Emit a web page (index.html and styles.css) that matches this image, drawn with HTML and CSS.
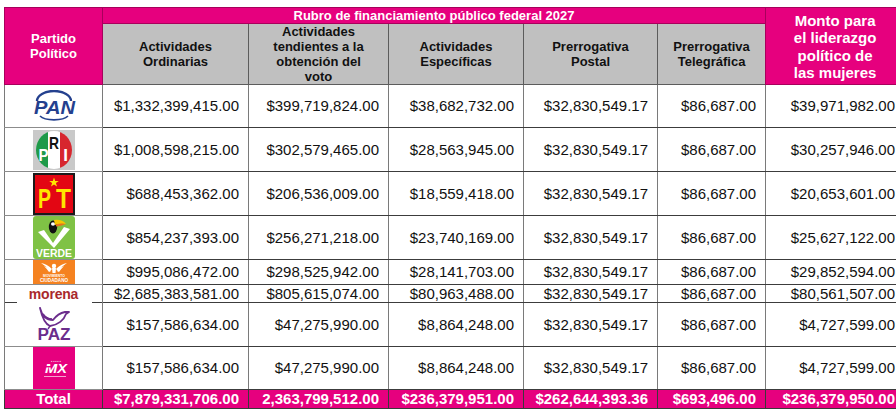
FILE: index.html
```html
<!DOCTYPE html>
<html lang="es">
<head>
<meta charset="utf-8">
<title>Financiamiento público federal 2027</title>
<link rel="stylesheet" href="styles.css">
</head>
<body>
<table class="fin">
  <colgroup>
    <col class="c-party"><col class="c-ord"><col class="c-voto"><col class="c-esp"><col class="c-postal"><col class="c-tel"><col class="c-muj">
  </colgroup>
  <thead>
    <tr class="r-h1">
      <th rowspan="2" class="pink party-h">Partido<br>Político</th>
      <th colspan="5" class="pink rubro">Rubro de financiamiento público federal 2027</th>
      <th rowspan="2" class="pink monto">Monto para<br>el liderazgo<br>político de<br>las mujeres</th>
    </tr>
    <tr class="r-h2">
      <th class="gray">Actividades<br>Ordinarias</th>
      <th class="gray">Actividades<br>tendientes a la<br>obtención del<br>voto</th>
      <th class="gray">Actividades<br>Específicas</th>
      <th class="gray">Prerrogativa<br>Postal</th>
      <th class="gray">Prerrogativa<br>Telegráfica</th>
    </tr>
  </thead>
  <tbody>
    <tr class="r-pan">
      <td class="party">
        <svg class="logo" width="44" height="32" viewBox="0 0 44 32" aria-label="PAN">
          <path d="M5 11 A17 10 0 0 1 39 11" fill="none" stroke="#24408e" stroke-width="2.4"/>
          <text x="2" y="24" class="pan-t" textLength="41" lengthAdjust="spacingAndGlyphs">PAN</text>
          <path d="M8 26 A15 6 0 0 0 36 26" fill="none" stroke="#24408e" stroke-width="1.6"/>
        </svg>
      </td>
      <td>$1,332,399,415.00</td><td>$399,719,824.00</td><td>$38,682,732.00</td><td>$32,830,549.17</td><td>$86,687.00</td><td>$39,971,982.00</td>
    </tr>
    <tr class="r-pri">
      <td class="party">
        <svg class="logo" width="42" height="40" viewBox="0 0 42 40" aria-label="PRI">
          <defs><clipPath id="pri-c"><ellipse cx="21" cy="20" rx="18" ry="19"/></clipPath></defs>
          <rect width="42" height="40" fill="#c9c9c9"/>
          <g clip-path="url(#pri-c)">
            <rect x="0" y="0" width="15" height="40" fill="#1f9a49"/>
            <rect x="15" y="0" width="12" height="40" fill="#ffffff"/>
            <rect x="27" y="0" width="15" height="40" fill="#d7262e"/>
          </g>
          <text x="10.5" y="31" class="pri-t w" textLength="10" lengthAdjust="spacingAndGlyphs">P</text>
          <text x="21" y="19" class="pri-t k" textLength="10" lengthAdjust="spacingAndGlyphs">R</text>
          <text x="32.5" y="31" class="pri-t w">I</text>
        </svg>
      </td>
      <td>$1,008,598,215.00</td><td>$302,579,465.00</td><td>$28,563,945.00</td><td>$32,830,549.17</td><td>$86,687.00</td><td>$30,257,946.00</td>
    </tr>
    <tr class="r-pt">
      <td class="party">
        <svg class="logo" width="42" height="42" viewBox="0 0 42 42" aria-label="PT">
          <rect x="1" y="1" width="40" height="40" fill="#e30613" stroke="#1a1a1a" stroke-width="2"/>
          <polygon points="21,4.5 22.2,8 25.8,8 22.9,10.1 24,13.5 21,11.4 18,13.5 19.1,10.1 16.2,8 19.8,8" fill="#ffe500"/>
          <text x="5" y="35" class="pt-t" textLength="13" lengthAdjust="spacingAndGlyphs">P</text>
          <text x="23" y="35" class="pt-t" textLength="15" lengthAdjust="spacingAndGlyphs">T</text>
        </svg>
      </td>
      <td>$688,453,362.00</td><td>$206,536,009.00</td><td>$18,559,418.00</td><td>$32,830,549.17</td><td>$86,687.00</td><td>$20,653,601.00</td>
    </tr>
    <tr class="r-verde">
      <td class="party">
        <svg class="logo" width="42" height="43" viewBox="0 0 42 43" aria-label="VERDE">
          <rect width="42" height="43" rx="3" fill="#7fc245"/>
          <polygon points="5,16 11,14 20,27 31,11 37,13 21,32" fill="#ffffff"/>
          <ellipse cx="20" cy="11" rx="4.2" ry="6.5" fill="#111111"/>
          <ellipse cx="20" cy="8" rx="2" ry="1.8" fill="#ffffff"/>
          <path d="M21 4 Q29 3 33 8 Q27 7 22 9 Z" fill="#f7c600"/>
          <path d="M23 8.5 Q28 7 33 8 Q28 10 23 10.5 Z" fill="#e8731a"/>
          <text x="3" y="40.5" class="verde-t" textLength="36" lengthAdjust="spacingAndGlyphs">VERDE</text>
        </svg>
      </td>
      <td>$854,237,393.00</td><td>$256,271,218.00</td><td>$23,740,169.00</td><td>$32,830,549.17</td><td>$86,687.00</td><td>$25,627,122.00</td>
    </tr>
    <tr class="r-mc">
      <td class="party">
        <svg class="logo" width="42" height="24" viewBox="0 0 42 24" aria-label="Movimiento Ciudadano">
          <rect width="42" height="24" fill="#f58220"/>
          <path d="M8 3 Q14 4 19 9 L17 11 Q13 6 8 3 Z" fill="#ffffff"/>
          <path d="M34 3 Q28 4 23 9 L25 11 Q29 6 34 3 Z" fill="#ffffff"/>
          <path d="M11 6 Q15 7 18 11 L16 12 Q14 9 11 6 Z" fill="#ffffff"/>
          <path d="M31 6 Q27 7 24 11 L26 12 Q28 9 31 6 Z" fill="#ffffff"/>
          <circle cx="21" cy="6" r="2.2" fill="#ffffff"/>
          <path d="M19 8 L23 8 L22.5 13 L19.5 13 Z" fill="#ffffff"/>
          <text x="21" y="17" class="mc-t s">MOVIMIENTO</text>
          <text x="21" y="22" class="mc-t b">CIUDADANO</text>
        </svg>
      </td>
      <td>$995,086,472.00</td><td>$298,525,942.00</td><td>$28,141,703.00</td><td>$32,830,549.17</td><td>$86,687.00</td><td>$29,852,594.00</td>
    </tr>
    <tr class="r-morena">
      <td class="party morena-cell"><span class="morena">morena</span></td>
      <td>$2,685,383,581.00</td><td>$805,615,074.00</td><td>$80,963,488.00</td><td>$32,830,549.17</td><td>$86,687.00</td><td>$80,561,507.00</td>
    </tr>
    <tr class="r-paz">
      <td class="party paz-cell">
        <svg class="logo" width="36" height="38" viewBox="0 0 36 38" aria-label="PAZ">
          <path d="M4 3 C6 11 11 15 17 15 C20 11 24 8 29 7 L33 7 L30 9 C28 15 22 20 14 21 C9 19 6 12 4 3 Z" fill="none" stroke="#6b2d8c" stroke-width="1.8" stroke-linejoin="round"/>
          <path d="M7 9 C10 13 13 14 16 14" fill="none" stroke="#6b2d8c" stroke-width="1.4"/>
          <path d="M14 21 L12 24" fill="none" stroke="#6b2d8c" stroke-width="1.4"/>
          <text x="18" y="35" class="paz-t" textLength="33" lengthAdjust="spacingAndGlyphs">PAZ</text>
        </svg>
      </td>
      <td>$157,586,634.00</td><td>$47,275,990.00</td><td>$8,864,248.00</td><td>$32,830,549.17</td><td>$86,687.00</td><td>$4,727,599.00</td>
    </tr>
    <tr class="r-mx">
      <td class="party">
        <svg class="logo" width="42" height="42" viewBox="0 0 42 42" aria-label="México">
          <rect width="42" height="42" fill="#e6007e"/>
          <text x="23" y="15" class="mx-s">● ● ● ● ●</text>
          <text x="12" y="26" class="mx-t" textLength="22" lengthAdjust="spacingAndGlyphs">MX</text>
          <rect x="11" y="19" width="8" height="1.4" fill="#e6007e"/>
          <rect x="11" y="29" width="22" height="0.8" fill="#ffffff" opacity="0.8"/>
        </svg>
      </td>
      <td>$157,586,634.00</td><td>$47,275,990.00</td><td>$8,864,248.00</td><td>$32,830,549.17</td><td>$86,687.00</td><td>$4,727,599.00</td>
    </tr>
    <tr class="r-total">
      <td class="total-l">Total</td>
      <td>$7,879,331,706.00</td><td>2,363,799,512.00</td><td>$236,379,951.00</td><td>$262,644,393.36</td><td>$693,496.00</td><td>$236,379,950.00</td>
    </tr>
  </tbody>
</table>
</body>
</html>
```
FILE: styles.css
```css
html, body {
  margin: 0;
  padding: 0;
  background: #ffffff;
  overflow: hidden;
}

body {
  font-family: "Liberation Sans", Arial, sans-serif;
  color: #111111;
}

.fin {
  margin: 7px 0 0 4px;
  border-collapse: collapse;
  table-layout: fixed;
  width: 900px;
}

.c-party { width: 98px; }
.c-ord { width: 146px; }
.c-voto { width: 140px; }
.c-esp { width: 135px; }
.c-postal { width: 134px; }
.c-tel { width: 108px; }
.c-muj { width: 139px; }

.fin th,
.fin td {
  padding: 0;
  border: 1px solid #7a7a7a;
}

.fin th {
  font-weight: bold;
  font-size: 13px;
  line-height: 15px;
  text-align: center;
  vertical-align: middle;
}

.fin th.pink {
  background: #e6007e;
  color: #ffffff;
  border-color: #a8005c;
}

.fin th.gray {
  background: #c0c0c0;
  color: #111111;
  border-color: #5c5c5c;
}

.fin th.rubro {
  font-size: 13px;
  line-height: 14px;
}

.fin th.monto {
  font-size: 15px;
  line-height: 17.3px;
  padding-top: 1px;
}

.r-h1 { height: 16px; }
.r-h2 { height: 61px; }
.r-pan { height: 43px; }
.r-pri { height: 44px; }
.r-pt { height: 44px; }
.r-verde { height: 44px; }
.r-mc { height: 25px; }
.r-morena { height: 18px; }
.r-paz { height: 44px; }
.r-mx { height: 43px; }
.r-total { height: 19px; }

.fin td {
  font-size: 15px;
  line-height: 16px;
  text-align: right;
  padding-right: 9px;
  vertical-align: middle;
  border-top-color: #3c3c3c;
  border-bottom-color: #3c3c3c;
}

.fin td.party {
  padding: 0;
  text-align: center;
  border-top-color: #8c8c8c;
  border-bottom-color: #8c8c8c;
}

.logo {
  display: block;
  margin: 0 auto;
}

.fin td.morena-cell {
  border-bottom-style: hidden;
  background:
    linear-gradient(#3c3c3c, #3c3c3c) left bottom / 12px 1px no-repeat,
    linear-gradient(#3c3c3c, #3c3c3c) right bottom / 10px 1px no-repeat;
}

.fin td.paz-cell {
  border-top-style: hidden;
}

.morena {
  display: block;
  font-weight: bold;
  font-size: 14px;
  line-height: 16px;
  color: #a9292c;
  letter-spacing: -0.2px;
}

.pan-t {
  font-family: "Liberation Sans", Arial, sans-serif;
  font-weight: bold;
  font-style: italic;
  font-size: 19px;
  fill: #24408e;
}

.pri-t {
  font-family: "Liberation Sans", Arial, sans-serif;
  font-weight: bold;
  font-size: 17px;
  text-anchor: middle;
}
.pri-t.w { fill: #ffffff; }
.pri-t.k { fill: #111111; }

.pt-t {
  font-family: "Liberation Sans", Arial, sans-serif;
  font-weight: bold;
  font-size: 28px;
  fill: #ffe500;
}

.verde-t {
  font-family: "Liberation Sans", Arial, sans-serif;
  font-weight: bold;
  font-size: 11.5px;
  fill: #ffffff;
}

.mc-t {
  font-family: "Liberation Sans", Arial, sans-serif;
  font-weight: bold;
  fill: #ffffff;
  text-anchor: middle;
}
.mc-t.s { font-size: 3.4px; }
.mc-t.b { font-size: 4.6px; }

.paz-t {
  font-family: "Liberation Sans", Arial, sans-serif;
  font-weight: bold;
  font-size: 16px;
  fill: #6b2d8c;
  text-anchor: middle;
}

.mx-t {
  font-family: "Liberation Sans", Arial, sans-serif;
  font-weight: bold;
  font-style: italic;
  font-size: 12px;
  fill: #ffffff;
}

.mx-s {
  font-family: "Liberation Sans", Arial, sans-serif;
  font-size: 2.4px;
  fill: #ffffff;
  text-anchor: middle;
}

.r-total td {
  background: #e6007e;
  color: #ffffff;
  font-weight: bold;
  border-color: #3a3a3a;
}

.r-total td.total-l {
  text-align: center;
  padding-right: 0;
}
```
